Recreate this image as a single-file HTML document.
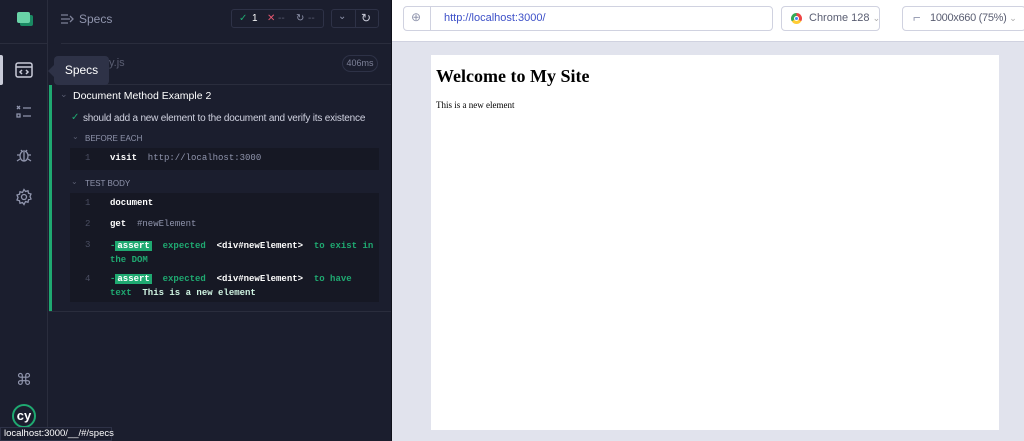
<!DOCTYPE html>
<html><head><meta charset="utf-8"><style>
*{box-sizing:border-box;margin:0;padding:0}
body{width:1024px;height:441px;overflow:hidden;background:#1b1e2e;font-family:"Liberation Sans",sans-serif;position:relative}
.abs{position:absolute;white-space:nowrap}
.side{left:0;top:0;width:48px;height:441px;background:#1b1e2e;border-right:1px solid #2a2d3d}
.panel{left:49px;top:0;width:342px;height:441px;background:#1b1e2e}
.right{left:391px;top:0;width:633px;height:441px;background:#e1e3ed;border-left:1px solid #0f111a}
.mono{font-family:"Liberation Mono",monospace;font-size:9px;font-weight:bold}
.code{background:#161824;left:70px;width:309px}
.ln{color:#4a4e62;position:absolute;left:15px;font-weight:normal}
.grn{color:#1fa971}
.badge{background:#1fa971;color:#fff;padding:0 2px}
.box{background:#fff;border:1px solid #d0d2e0;border-radius:4px;height:25px;top:6px}
</style></head><body>
<div class="abs side">
  <div class="abs" style="left:17px;top:12px;width:13px;height:11px;background:#69d3a7;border-radius:2px;box-shadow:3px 3px 0 #1a8a63"></div>
  <div class="abs" style="left:0;top:43px;width:48px;height:1px;background:#2a2d3d"></div>
  <div class="abs" style="left:0;top:55px;width:3px;height:30px;background:#c9cbd8;border-radius:0 2px 2px 0"></div>
  <svg class="abs" style="left:14px;top:61px" width="20" height="18" viewBox="0 0 20 18" fill="none" stroke="#c9cbd8" stroke-width="1.5"><rect x="2" y="2" width="16" height="14" rx="2"/><path d="M2 6h16M8 9l-2 2 2 2M12 9l2 2-2 2"/></svg>
  <svg class="abs" style="left:15px;top:104px" width="18" height="16" viewBox="0 0 18 16" fill="none" stroke="#9095ad" stroke-width="1.3"><path d="M2 2l3 3M5 2l-3 3M8 4h8M2 10h3v3H2zM8 12h8"/></svg>
  <svg class="abs" style="left:15px;top:146px" width="18" height="18" viewBox="0 0 18 18" fill="none" stroke="#9095ad" stroke-width="1.3"><ellipse cx="9" cy="10" rx="4" ry="5"/><path d="M6 4l1.5 2M12 4l-1.5 2M5 9H2M16 9h-3M5 13l-3 2M13 13l3 2M9 6v9"/></svg>
  <svg class="abs" style="left:15px;top:188px" width="18" height="18" viewBox="0 0 18 18" fill="none" stroke="#9095ad" stroke-width="1.3"><circle cx="9" cy="9" r="2.5"/><path d="M9 1.5l1.5 2 2.5-.8.5 2.5 2.5.8-1 2.5 1 2.5-2.5.8-.5 2.5-2.5-.8L9 16.5l-1.5-2-2.5.8-.5-2.5-2.5-.8 1-2.5-1-2.5 2.5-.8.5-2.5 2.5.8z"/></svg>
  <div class="abs" style="left:16px;top:370px;color:#9095ad;font-size:16px">⌘</div>
  <div class="abs" style="left:12px;top:404px;width:24px;height:24px;border-radius:50%;border:2px solid #1fa971;color:#fff;font-weight:bold;font-size:13px;text-align:center;line-height:19px">cy</div>
</div>
<div class="abs panel">
  <svg class="abs" style="left:11px;top:13px" width="14" height="12" viewBox="0 0 14 12" fill="none" stroke="#7e8299" stroke-width="1.3"><path d="M1 2h7M1 6h9M1 10h7M10 3l3 3-3 3"/></svg>
  <div class="abs" style="left:30px;top:12px;color:#9095ad;font-size:12px">Specs</div>
  <div class="abs" style="left:182px;top:9px;width:93px;height:19px;border:1px solid #2e3247;border-radius:3px;font-size:10px;line-height:17px;color:#5a5e72">
    <span style="position:absolute;left:7px;color:#1fa971">✓</span><span style="position:absolute;left:20px;color:#fff">1</span>
    <span style="position:absolute;left:35px;color:#e45770">✕</span><span style="position:absolute;left:46px">--</span>
    <span style="position:absolute;left:64px;color:#9095ad">↻</span><span style="position:absolute;left:76px">--</span></div>
  <div class="abs" style="left:282px;top:9px;width:48px;height:19px;border:1px solid #2e3247;border-radius:3px"><div style="position:absolute;left:23px;top:0;width:1px;height:17px;background:#2e3247"></div><span style="position:absolute;left:6px;top:1px;color:#9095ad;font-size:10px">⌄</span><span style="position:absolute;left:29px;top:1px;color:#c9cbd8;font-size:12px">↻</span></div>
  <div class="abs" style="left:12px;top:43px;width:330px;height:1px;background:#2a2d3d"></div>
  <div class="abs" style="left:60px;top:57px;color:#5a5e72;font-size:11px">y.js</div>
  <div class="abs" style="left:293px;top:55px;width:36px;height:17px;border:1px solid #2e3247;border-radius:9px;color:#7e8299;font-size:9px;text-align:center;line-height:15px">406ms</div>
  <div class="abs" style="left:12px;top:84px;width:330px;height:1px;background:#2a2d3d"></div>
  <div class="abs" style="left:0;top:85px;width:3px;height:227px;background:#1fa971"></div>
  <div class="abs" style="left:11px;top:89px;color:#5a5e72;font-size:9px">⌄</div>
  <div class="abs" style="left:24px;top:90px;color:#fff;font-size:10.5px">Document Method Example 2</div>
  <div class="abs" style="left:22px;top:112px;color:#1fa971;font-size:10px">✓</div>
  <div class="abs" style="left:34px;top:113px;color:#d0d2e0;font-size:10px;letter-spacing:-0.2px">should add a new element to the document and verify its existence</div>
  <div class="abs" style="left:23px;top:132px;color:#5a5e72;font-size:8px">⌄</div>
  <div class="abs" style="left:36px;top:134px;color:#9095ad;font-size:8px">BEFORE EACH</div>
  <div class="abs" style="left:22px;top:177px;color:#5a5e72;font-size:8px">⌄</div>
  <div class="abs" style="left:36px;top:179px;color:#9095ad;font-size:8px">TEST BODY</div>
  <div class="abs" style="left:0;top:311px;width:342px;height:1px;background:#2a2d3d"></div>
</div>
<div class="abs code mono" style="top:148px;height:22px;color:#fff"><span class="ln" style="top:5px">1</span><span style="position:absolute;left:40px;top:5px">visit <span style="color:#9095ad;font-weight:normal">&nbsp;http://localhost:3000</span></span></div>
<div class="abs code mono" style="top:193px;height:109px;color:#fff">
  <span class="ln" style="top:5px">1</span><span style="position:absolute;left:40px;top:5px">document</span>
  <span class="ln" style="top:26px">2</span><span style="position:absolute;left:40px;top:26px">get <span style="color:#9095ad;font-weight:normal">&nbsp;#newElement</span></span>
  <span class="ln" style="top:47px">3</span><div style="position:absolute;left:40px;top:46px;width:265px;line-height:14px;white-space:normal" class="grn">-<span class="badge">assert</span>&nbsp; expected&nbsp; <span style="color:#fff">&lt;div#newElement&gt;</span>&nbsp; to exist in the DOM</div>
  <span class="ln" style="top:81px">4</span><div style="position:absolute;left:40px;top:79px;width:265px;line-height:14px;white-space:normal" class="grn">-<span class="badge">assert</span>&nbsp; expected&nbsp; <span style="color:#fff">&lt;div#newElement&gt;</span>&nbsp; to have text&nbsp; <span style="color:#d0f5e3">This is a new element</span></div>
</div>
<div class="abs" style="left:54px;top:56px;width:55px;height:29px;background:#2e3247;border-radius:4px;color:#fff;font-size:12px;line-height:29px;text-align:center">Specs</div>
<div class="abs" style="left:48px;top:65px;width:0;height:0;border:6px solid transparent;border-right-color:#2e3247;border-left:0"></div>
<div class="abs" style="left:0;top:427px;width:112px;height:14px;background:#1b1e2e;border:1px solid #2e3247;color:#fff;font-size:9.5px;line-height:12px;padding-left:3px">localhost:3000/__/#/specs</div>
<div class="abs right">
  <div class="abs" style="left:0;top:0;width:633px;height:42px;background:#fff;border-bottom:1px solid #d0d2e0"></div>
  <div class="abs box" style="left:11px;width:370px"><div style="position:absolute;left:26px;top:0;width:1px;height:23px;background:#d0d2e0"></div><span style="position:absolute;left:7px;top:3px;color:#9095ad;font-size:12px">⊕</span><span style="position:absolute;left:40px;top:5px;color:#3d50c8;font-size:11px">http://localhost:3000/</span></div>
  <div class="abs box" style="left:389px;width:99px"><span style="position:absolute;left:9px;top:6px;width:11px;height:11px;border-radius:50%;background:conic-gradient(#e44 0 120deg,#fc3 120deg 240deg,#3a5 240deg);"></span><span style="position:absolute;left:12px;top:9px;width:5px;height:5px;border-radius:50%;background:#4285f4;border:1px solid #fff"></span><span style="position:absolute;left:27px;top:5px;color:#5a5e72;font-size:11px">Chrome 128 <span style="color:#aaa;font-size:9px">⌄</span></span></div>
  <div class="abs box" style="left:510px;width:124px"><span style="position:absolute;left:10px;top:3px;color:#9095ad;font-size:13px">⌐</span><span style="position:absolute;left:27px;top:5px;color:#5a5e72;font-size:11px;letter-spacing:-0.3px">1000x660 (75%) <span style="color:#aaa;font-size:9px">⌄</span></span></div>
  <div class="abs" style="left:39px;top:55px;width:568px;height:375px;background:#fff;font-family:'Liberation Serif',serif;color:#000">
    <div style="position:absolute;left:5px;top:11px;font-size:18px;font-weight:bold">Welcome to My Site</div>
    <div style="position:absolute;left:5px;top:45px;font-size:9px">This is a new element</div>
  </div>
</div>
</body></html>
